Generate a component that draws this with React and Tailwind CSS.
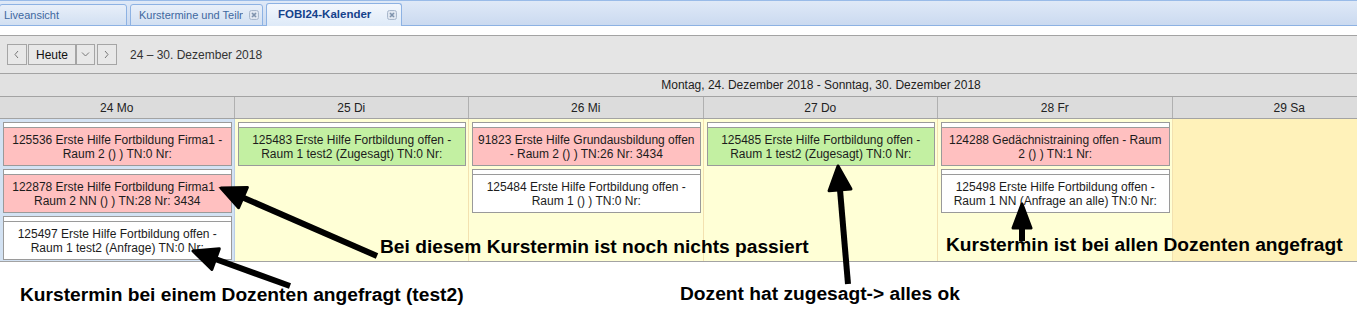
import React from 'react';

const days = [
  {
    label: '24 Mo',
    bg: 'bg-[#d3e2f3]',
    line: 'border-r-[#b9cde6]',
    events: [
      { color: 'bg-[#ffc0c0]', lines: ['125536 Erste Hilfe Fortbildung Firma1 -', 'Raum 2 () ) TN:0 Nr:'] },
      { color: 'bg-[#ffc0c0]', lines: ['122878 Erste Hilfe Fortbildung Firma1 -', 'Raum 2 NN () ) TN:28 Nr: 3434'] },
      { color: 'bg-white', lines: ['125497 Erste Hilfe Fortbildung offen -', 'Raum 1 test2 (Anfrage) TN:0 Nr:'] },
    ],
  },
  {
    label: '25 Di',
    bg: 'bg-[#ffffd6]',
    line: 'border-r-[#f3e1b0]',
    events: [
      { color: 'bg-[#c3f0a2]', lines: ['125483 Erste Hilfe Fortbildung offen -', 'Raum 1 test2 (Zugesagt) TN:0 Nr:'] },
    ],
  },
  {
    label: '26 Mi',
    bg: 'bg-[#ffffd6]',
    line: 'border-r-[#f3e1b0]',
    events: [
      { color: 'bg-[#ffc0c0]', lines: ['91823 Erste Hilfe Grundausbildung offen', '- Raum 2 () ) TN:26 Nr: 3434'] },
      { color: 'bg-white', lines: ['125484 Erste Hilfe Fortbildung offen -', 'Raum 1 () ) TN:0 Nr:'] },
    ],
  },
  {
    label: '27 Do',
    bg: 'bg-[#ffffd6]',
    line: 'border-r-[#f3e1b0]',
    events: [
      { color: 'bg-[#c3f0a2]', lines: ['125485 Erste Hilfe Fortbildung offen -', 'Raum 1 test2 (Zugesagt) TN:0 Nr:'] },
    ],
  },
  {
    label: '28 Fr',
    bg: 'bg-[#ffffd6]',
    line: 'border-r-[#f3e1b0]',
    events: [
      { color: 'bg-[#ffc0c0]', lines: ['124288 Gedächnistraining offen - Raum', '2 () ) TN:1 Nr:'] },
      { color: 'bg-white', lines: ['125498 Erste Hilfe Fortbildung offen -', 'Raum 1 NN (Anfrage an alle) TN:0 Nr:'] },
    ],
  },
  { label: '29 Sa', bg: 'bg-[#fff2ba]', line: 'border-r-[#f3e1b0]', events: [] },
];

function CloseIcon() {
  return (
    <svg width="10" height="10" viewBox="0 0 10 10" className="shrink-0">
      <rect x="0.5" y="0.5" width="9" height="9" rx="2" fill="#dfe6f0" stroke="#a9b8cc" />
      <path d="M3 3 L7 7 M7 3 L3 7" stroke="#7f93ad" strokeWidth="1.6" />
    </svg>
  );
}

function Chevron({ dir }) {
  const d = dir === 'left' ? 'M5 1 L2 4.5 L5 8' : dir === 'right' ? 'M2 1 L5 4.5 L2 8' : 'M1 2.5 L4.5 6 L8 2.5';
  return (
    <svg width="9" height="9" viewBox="0 0 9 9">
      <path d={d} fill="none" stroke="#777" strokeWidth="1" />
    </svg>
  );
}

function Event({ color, lines }) {
  return (
    <div className="ml-[3px] mr-[2px] mt-[3px]">
      <div className="h-[6px] border border-[#9a9a9a] bg-white" />
      <div className={`h-[38px] border border-t-0 border-[#9a9a9a] ${color} flex flex-col items-center justify-center text-center text-[12px] leading-[14px] text-[#1c1c1c]`}>
        {lines.map((l) => (
          <span key={l} className="whitespace-nowrap">{l}</span>
        ))}
      </div>
    </div>
  );
}

function Arrow({ x1, y1, x2, y2, head = 24, w = 22, sw = 6 }) {
  const dx = x2 - x1;
  const dy = y2 - y1;
  const len = Math.hypot(dx, dy);
  const ux = dx / len;
  const uy = dy / len;
  const bx = x2 - ux * head;
  const by = y2 - uy * head;
  const px = (-uy * w) / 2;
  const py = (ux * w) / 2;
  return (
    <g>
      <line x1={x1} y1={y1} x2={bx + ux * 4} y2={by + uy * 4} stroke="#000" strokeWidth={sw} />
      <polygon
        points={`${x2},${y2} ${bx + px},${by + py} ${bx - px},${by - py}`}
        fill="#000"
        stroke="#000"
        strokeWidth="3"
        strokeLinejoin="round"
      />
    </g>
  );
}

export default function App() {
  return (
    <div className="relative w-[1357px] h-[310px] overflow-hidden bg-white font-['Liberation_Sans',Arial,sans-serif] text-[12px]">
      {/* tab strip */}
      <div className="h-[26px] border-t border-[#99bbe8] border-b border-b-[#8db2e3] bg-gradient-to-b from-[#dfe9f7] to-[#cbdaf0] flex items-end gap-[3px] text-[11px]">
        <div className="h-[22px] w-[128px] -ml-px -mb-px rounded-t-[3px] border border-[#8db2e3] bg-gradient-to-b from-[#e8eff9] to-[#d2e0f2] flex items-center pl-[4px] text-[#3f689f]">
          Liveansicht
        </div>
        <div className="h-[22px] w-[133px] -mb-px rounded-t-[3px] border border-[#8db2e3] bg-gradient-to-b from-[#e8eff9] to-[#d2e0f2] flex items-center pl-[8px] pr-[3px] gap-[6px] text-[#3f689f]">
          <span className="whitespace-nowrap overflow-hidden w-[106px]">Kurstermine und Teiln</span>
          <CloseIcon />
        </div>
        <div className="h-[23px] w-[136px] -mb-px rounded-t-[3px] border border-b-0 border-[#8db2e3] bg-gradient-to-b from-[#f3f7fd] to-[#deeaf8] flex items-center pl-[11px] pr-[4px] justify-between font-bold text-[11.5px] text-[#15428b]">
          <span>FOBI24-Kalender</span>
          <CloseIcon />
        </div>
      </div>
      <div className="h-[9px] bg-white" />

      {/* toolbar */}
      <div className="h-[38px] border-t border-[#a3a3a3] bg-[#e5e5e5] flex items-center pl-[7px] gap-[1px] text-[#222]">
        <button className="h-[21px] w-[20px] border border-[#a5a5a5] bg-[#e8e8e8] flex items-center justify-center">
          <Chevron dir="left" />
        </button>
        <button className="h-[21px] w-[48px] border border-[#a5a5a5] bg-[#e8e8e8] flex items-center justify-center text-[12px] text-[#111]">
          Heute
        </button>
        <button className="h-[21px] w-[19px] -ml-px border border-[#a5a5a5] bg-[#e8e8e8] flex items-center justify-center">
          <Chevron dir="down" />
        </button>
        <button className="h-[21px] w-[20px] ml-px border border-[#a5a5a5] bg-[#e8e8e8] flex items-center justify-center">
          <Chevron dir="right" />
        </button>
        <span className="ml-[12px] text-[#333]">24 – 30. Dezember 2018</span>
      </div>

      {/* calendar: 7 columns, the last one (30 So) lies beyond the window */}
      <div className="w-[1642px]">
        <div className="h-[23px] border-t border-[#a3a3a3] bg-[#e1e1e1] flex items-center justify-center text-[#222]">
          Montag, 24. Dezember 2018 - Sonntag, 30. Dezember 2018
        </div>
        <div className="grid grid-cols-[repeat(7,234.5px)] h-[23px] border-t border-b border-[#a3a3a3] bg-[#dcdcdc]">
          {days.map((d) => (
            <div key={d.label} className="border-r border-[#b0b0b0] flex items-center justify-center text-[#222]">
              {d.label}
            </div>
          ))}
          <div />
        </div>
        <div className="grid grid-cols-[repeat(7,234.5px)] h-[143px] border-b border-[#a3a3a3]">
          {days.map((d) => (
            <div key={d.label} className={`${d.bg} border-r ${d.line}`}>
              {d.events.map((e) => (
                <Event key={e.lines[0]} {...e} />
              ))}
            </div>
          ))}
          <div className="bg-[#fff2ba]" />
        </div>
      </div>

      {/* annotations */}
      <svg className="absolute inset-0 pointer-events-none" width="1357" height="310">
        <Arrow x1={377} y1={256} x2={221} y2={188} />
        <Arrow x1={290} y1={286} x2={193} y2={251} />
        <Arrow x1={848} y1={284} x2={838} y2={166} />
        <Arrow x1={1022} y1={241} x2={1022} y2={204} head={24} w={18} />
      </svg>
      <span className="absolute left-[380px] top-[237px] text-[19.2px] leading-none font-bold text-black whitespace-nowrap">
        Bei diesem Kurstermin ist noch nichts passiert
      </span>
      <span className="absolute left-[946px] top-[235px] text-[19.2px] leading-none font-bold text-black whitespace-nowrap">
        Kurstermin ist bei allen Dozenten angefragt
      </span>
      <span className="absolute left-[20px] top-[285px] text-[19.2px] leading-none font-bold text-black whitespace-nowrap">
        Kurstermin bei einem Dozenten angefragt (test2)
      </span>
      <span className="absolute left-[680px] top-[284px] text-[19.2px] leading-none font-bold text-black whitespace-nowrap">
        Dozent hat zugesagt-&gt; alles ok
      </span>
    </div>
  );
}
